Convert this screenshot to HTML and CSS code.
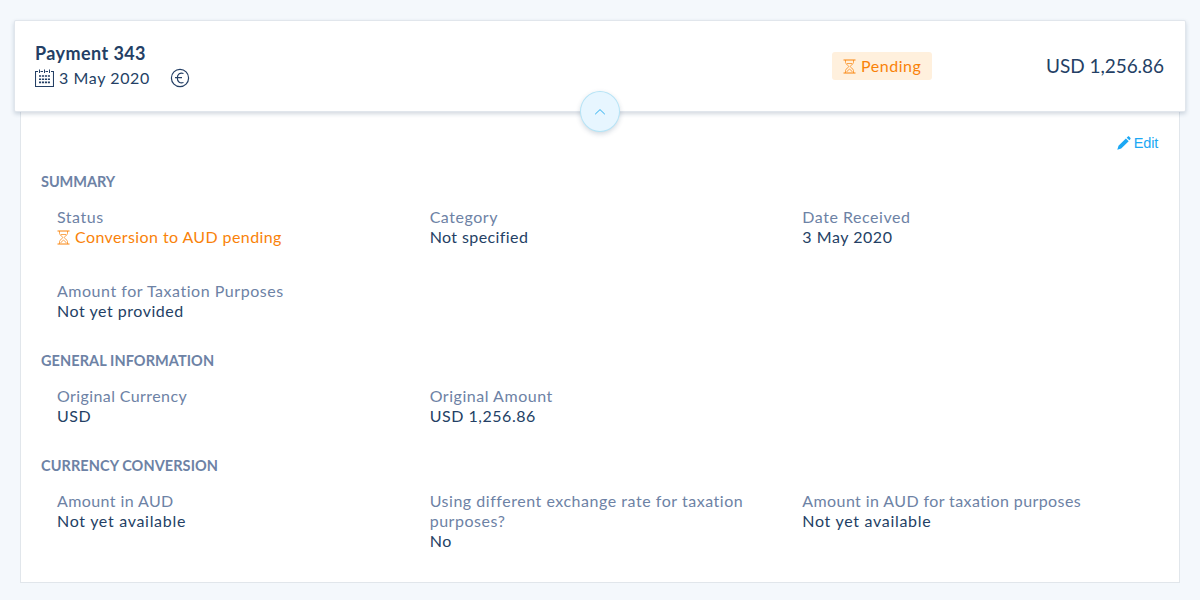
FILE: index.html
```html
<!DOCTYPE html>
<html lang="en">
<head>
<meta charset="utf-8">
<title>Payment 343</title>
<link rel="stylesheet" href="styles.css">
</head>
<body>
<svg class="defs" width="0" height="0" aria-hidden="true">
  <symbol id="hourglass" viewBox="0 0 13 15">
    <path d="M.5 1h12M.5 14h12" fill="none" stroke="currentColor" stroke-width="1"/>
    <path d="M2.500 1v2.500c0 2 3.200 2.500 3.200 4S2.500 9.500 2.500 11.500V14M10.500 1v2.500c0 2-3.200 2.500-3.200 4s3.200 2 3.200 4V14M4 4.500h5M3.800 13c.4-1.700 1.700-2 2.700-2.800 1 .8 2.300 1.100 2.700 2.800" fill="none" stroke="currentColor" stroke-width=".7"/>
  </symbol>
</svg>
<main class="page">
  <header class="payment">
    <div class="payment-info">
      <h1 class="payment-title">Payment 343</h1>
      <div class="payment-meta">
        <svg class="icon-calendar" width="19" height="19" viewBox="0 0 19 19" fill="none" stroke="currentColor">
          <path d="M3 2.500H.5v15h18v-15H16M5.500 2.500h2.500M10.500 2.500H13" stroke-width="1.100"/>
          <path d="M4.500 .5v3.500M9.500 .5v3.500M14.500 .5v3.500"/>
          <path d="M4 7h11M4 10.200h11M4 13.400h11" stroke-width="1.600" stroke-dasharray="2.100 .85"/>
        </svg>
        <span class="date">3 May 2020</span>
        <svg class="icon-euro" width="20" height="20" viewBox="0 0 20 20" fill="none" stroke="currentColor" stroke-width="1.200">
          <circle cx="10" cy="10" r="8.600"/>
          <path d="M13.500 5.500C10.300 4.300 7.300 6 7.300 10s3 5.700 6.200 4.500M5 9.700h7"/>
        </svg>
      </div>
    </div>
    <div class="badge"><svg width="13" height="15"><use href="#hourglass"/></svg><span>Pending</span></div>
    <div class="total">USD 1,256.86</div>
    <button class="toggle" aria-label="Collapse"><svg width="12" height="8" viewBox="0 0 12 8"><path d="M1.200 6.200 6 1.600l4.800 4.600" fill="none" stroke="currentColor" stroke-width="1"/></svg></button>
  </header>
  <section class="details">
    <div class="actions">
      <a class="edit"><svg width="14" height="14" viewBox="0 0 14 14" fill="currentColor"><path d="M.3 13.700 1.500 9.700 8.900 2.400l2.800 2.800-7.500 7.400zM9.700 1.700l1-1c.6-.6 1.100-.5 1.600 0l1 1c.5.5.5 1 0 1.600l-.9.900z"/></svg><span>Edit</span></a>
    </div>
    <h2 class="heading">SUMMARY</h2>
    <dl class="grid">
      <div class="field"><dt>Status</dt><dd class="pending"><svg width="13" height="15"><use href="#hourglass"/></svg><span>Conversion to AUD pending</span></dd></div>
      <div class="field"><dt>Category</dt><dd class="snug">Not specified</dd></div>
      <div class="field"><dt>Date Received</dt><dd>3 May 2020</dd></div>
      <div class="field"><dt>Amount for Taxation Purposes</dt><dd>Not yet provided</dd></div>
    </dl>
    <h2 class="heading heading-long">GENERAL INFORMATION</h2>
    <dl class="grid">
      <div class="field"><dt class="snug">Original Currency</dt><dd>USD</dd></div>
      <div class="field"><dt>Original Amount</dt><dd>USD 1,256.86</dd></div>
    </dl>
    <h2 class="heading heading-long">CURRENCY CONVERSION</h2>
    <dl class="grid">
      <div class="field"><dt class="snug">Amount in AUD</dt><dd class="loose">Not yet available</dd></div>
      <div class="field"><dt>Using different exchange rate for taxation purposes?</dt><dd>No</dd></div>
      <div class="field"><dt class="snug">Amount in AUD for taxation purposes</dt><dd class="loose">Not yet available</dd></div>
    </dl>
  </section>
</main>
</body>
</html>
```

FILE: styles.css
```css
* { box-sizing: border-box; }
body {
  margin: 0;
  height: 600px;
  overflow: hidden;
  background: #f4f8fc;
  color: #243f65;
  font: 16px/20px Lato, "Open Sans", sans-serif;
  letter-spacing: .53px;
}
h1, h2, dl, dd { margin: 0; }
.defs { position: absolute; }
.page { padding: 21px 15px 0; }
.payment {
  position: relative;
  display: flex;
  align-items: center;
  height: 90px;
  padding: 0 21px 0 20px;
  background: #fff;
  border-radius: 1px;
  box-shadow: 0 0 0 1px #e1e6ec, 0 2px 4px 1px rgba(36, 63, 101, .2);
}
.payment-info { flex: 1; }
.payment-title { font-size: 18px; line-height: 24px; letter-spacing: .42px; }
.payment-meta { display: flex; align-items: center; height: 27px; }
.date { margin: 0 20px 0 5px; letter-spacing: .6px; }
.badge {
  display: flex;
  align-items: center;
  gap: 5px;
  width: 100px;
  height: 28px;
  padding-left: 11px;
  border-radius: 3px;
  background: #fff0dd;
  color: #f98209;
}
.total { width: 232px; text-align: right; font-size: 19px; letter-spacing: -.05px; }
.toggle {
  position: absolute;
  left: 565px;
  top: 70px;
  width: 40px;
  height: 41px;
  padding: 0;
  display: flex;
  align-items: center;
  justify-content: center;
  border: 1px solid #b6e4f6;
  border-radius: 50%;
  background: #e7f6ff;
  color: #2bb0f0;
  box-shadow: 0 2px 5px rgba(36, 63, 101, .2);
}
.details {
  height: 472px;
  margin: 0 5px;
  padding: 22px 20px 0;
  background: #fff;
  border: 1px solid #e1e6eb;
  border-top: 0;
}
.actions { display: flex; justify-content: flex-end; }
.edit {
  display: flex;
  align-items: center;
  gap: 3px;
  color: #1ca8f4;
  font: 14.500px/20px "Liberation Sans", Arial, sans-serif;
  letter-spacing: -.2px;
  padding-right: 1px;
}
.heading {
  margin-top: 20px;
  color: #6d82a5;
  font-size: 14.500px;
  line-height: 17px;
  letter-spacing: -.05px;
}
.heading-long { letter-spacing: .08px; }
.grid {
  display: grid;
  grid-template-columns: repeat(3, 1fr);
  row-gap: 34px;
  padding-top: 17px;
}
.grid + .heading { margin-top: 31px; }
.field { padding: 0 16px; }
.field dt { color: #6d82a5; }
.snug { letter-spacing: .4px; }
.loose { letter-spacing: .7px; }
.pending { display: flex; align-items: center; gap: 5px; color: #f98209; }
.field .pending { letter-spacing: .4px; }
```
